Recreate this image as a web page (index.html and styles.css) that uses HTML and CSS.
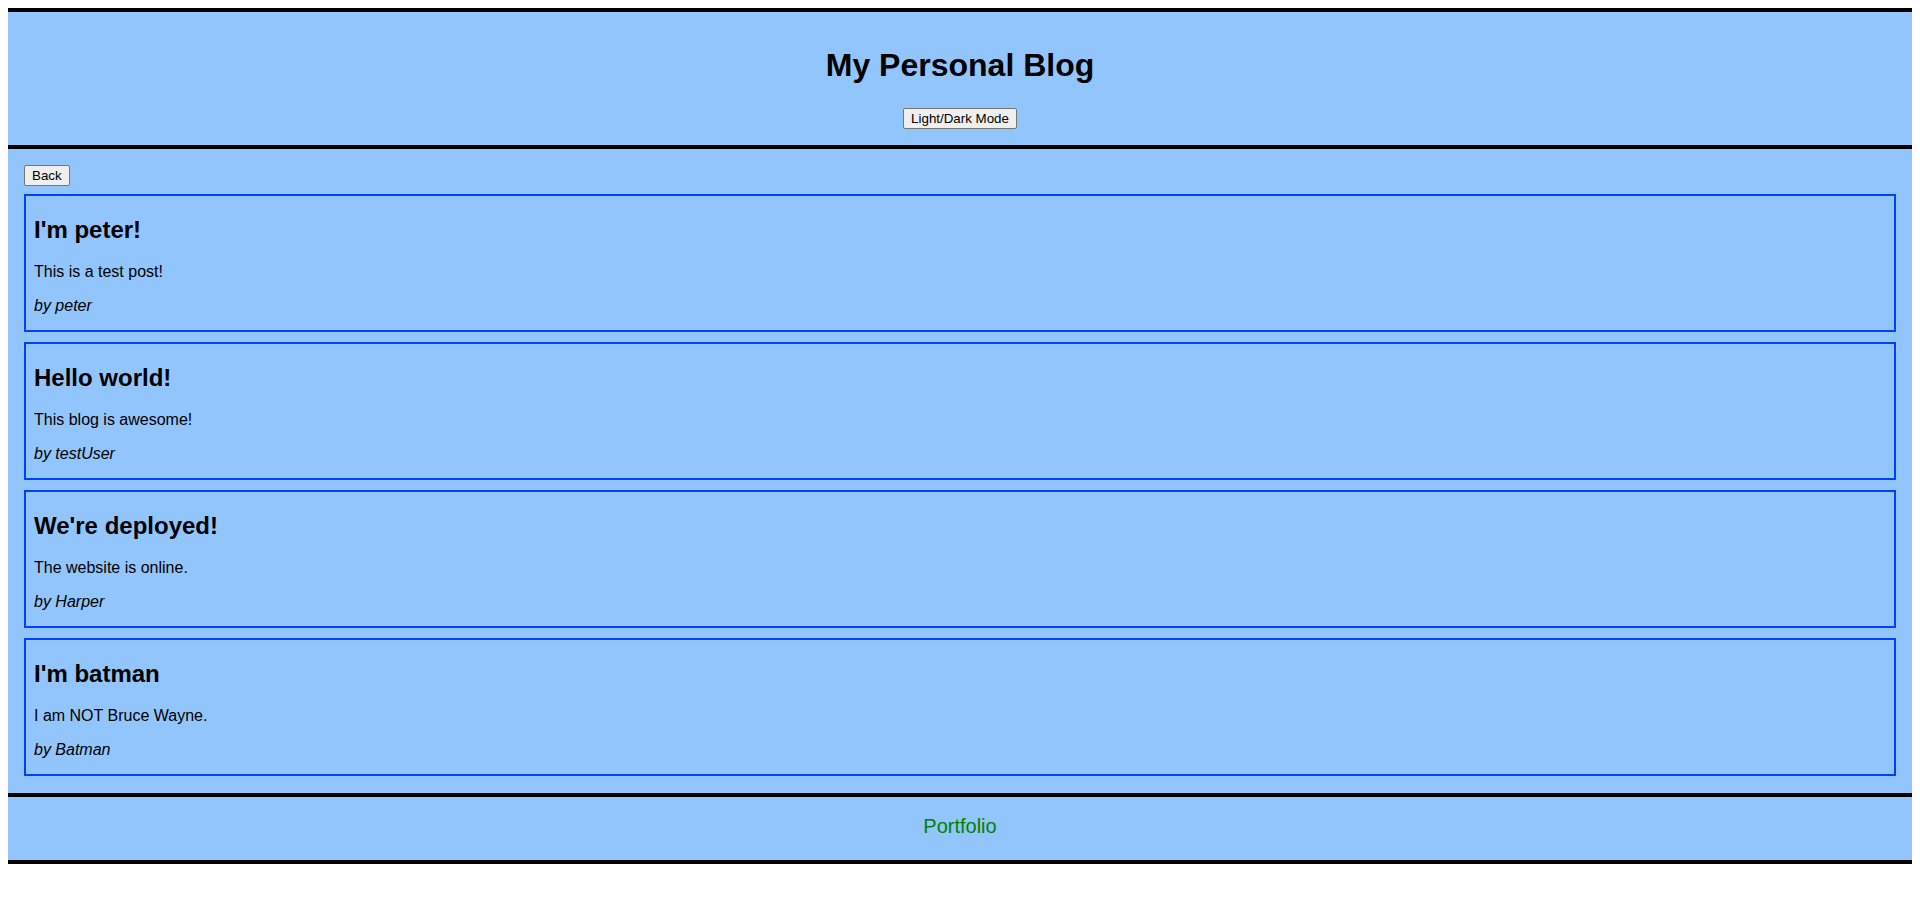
FILE: index.html
```html
<!DOCTYPE html>
<html lang="en">
<head>
<meta charset="utf-8">
<title>My Personal Blog</title>
<link rel="stylesheet" href="styles.css">
</head>
<body>
<header class="site-header">
  <h1 class="site-title">My Personal Blog</h1>
  <button class="btn mode-btn" type="button">Light/Dark Mode</button>
</header>
<main class="site-main">
  <button class="btn back-btn" type="button">Back</button>
  <article class="post">
    <h2 class="post-title">I'm peter!</h2>
    <p class="post-body">This is a test post!</p>
    <p class="post-author">by peter</p>
  </article>
  <article class="post">
    <h2 class="post-title">Hello world!</h2>
    <p class="post-body">This blog is awesome!</p>
    <p class="post-author">by testUser</p>
  </article>
  <article class="post">
    <h2 class="post-title">We're deployed!</h2>
    <p class="post-body">The website is online.</p>
    <p class="post-author">by Harper</p>
  </article>
  <article class="post">
    <h2 class="post-title">I'm batman</h2>
    <p class="post-body">I am NOT Bruce Wayne.</p>
    <p class="post-author">by Batman</p>
  </article>
</main>
<footer class="site-footer">
  <a class="footer-link" href="#">Portfolio</a>
</footer>
</body>
</html>
```

FILE: styles.css
```css
html, body {
  background: #ffffff;
}

body {
  margin: 8px;
  font-family: "Liberation Sans", Arial, sans-serif;
  color: #000000;
}

.site-header {
  display: flex;
  flex-direction: column;
  align-items: center;
  background: #93c5fd;
  border-top: 4px solid #000000;
  border-bottom: 4px solid #000000;
  padding: 35px 0 16px;
}

.site-title {
  margin: 0;
  font-size: 32px;
  line-height: 37px;
  font-weight: bold;
}

.btn {
  font-family: "Liberation Sans", Arial, sans-serif;
  font-size: 13.333px;
  line-height: 17px;
  color: #000000;
  background: #efefef;
  border: 1px solid #767676;
  border-radius: 2px;
  padding: 1px 7px;
  margin: 0;
}

.mode-btn {
  margin-top: 24px;
}

.site-main {
  display: flex;
  flex-direction: column;
  gap: 10px;
  background: #93c5fd;
  padding: 16px 16px 17px;
}

.back-btn {
  align-self: flex-start;
  margin-bottom: -2px;
}

.post {
  border: 2px solid #0040ff;
  padding: 0 8px;
}

.post-title {
  margin: 21px 0 20px;
  font-size: 24px;
  line-height: 26px;
  font-weight: bold;
}

.post-body {
  margin: 0 0 16px;
  font-size: 16px;
  line-height: 18px;
}

.post-author {
  margin: 0 0 15px;
  font-size: 16px;
  line-height: 18px;
  font-style: italic;
}

.site-footer {
  background: #93c5fd;
  border-top: 4px solid #000000;
  border-bottom: 4px solid #000000;
  padding: 18px 0 22px;
  text-align: center;
  font-size: 20px;
  line-height: 23px;
}

.footer-link {
  color: #008000;
  text-decoration: none;
}
```
